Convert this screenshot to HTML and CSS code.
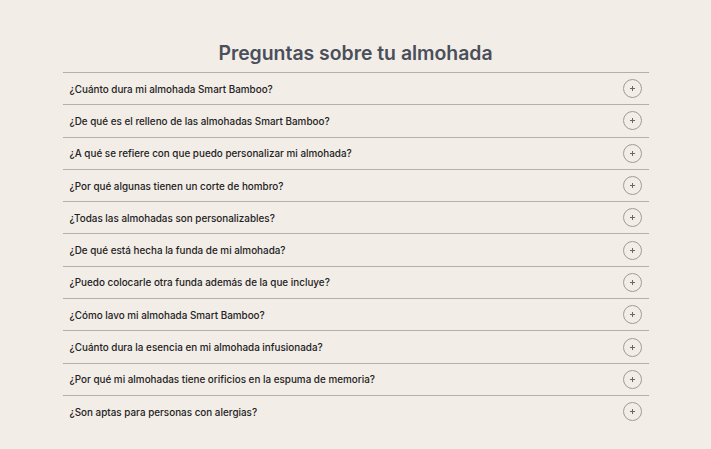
FILE: index.html
```html
<!DOCTYPE html>
<html lang="es">
<head>
<meta charset="utf-8">
<link rel="stylesheet" href="styles.css">
</head>
<body>
<section class="faq">
  <h2 class="faq-title">Preguntas sobre tu almohada</h2>
  <div class="faq-list">
    <div class="faq-item"><span class="q">¿Cuánto dura mi almohada Smart Bamboo?</span><span class="plus"></span></div>
    <div class="faq-item"><span class="q">¿De qué es el relleno de las almohadas Smart Bamboo?</span><span class="plus"></span></div>
    <div class="faq-item"><span class="q">¿A qué se refiere con que puedo personalizar mi almohada?</span><span class="plus"></span></div>
    <div class="faq-item"><span class="q">¿Por qué algunas tienen un corte de hombro?</span><span class="plus"></span></div>
    <div class="faq-item"><span class="q">¿Todas las almohadas son personalizables?</span><span class="plus"></span></div>
    <div class="faq-item"><span class="q">¿De qué está hecha la funda de mi almohada?</span><span class="plus"></span></div>
    <div class="faq-item"><span class="q">¿Puedo colocarle otra funda además de la que incluye?</span><span class="plus"></span></div>
    <div class="faq-item"><span class="q">¿Cómo lavo mi almohada Smart Bamboo?</span><span class="plus"></span></div>
    <div class="faq-item"><span class="q">¿Cuánto dura la esencia en mi almohada infusionada?</span><span class="plus"></span></div>
    <div class="faq-item"><span class="q">¿Por qué mi almohadas tiene orificios en la espuma de memoria?</span><span class="plus"></span></div>
    <div class="faq-item last"><span class="q">¿Son aptas para personas con alergias?</span><span class="plus"></span></div>
  </div>
</section>
</body>
</html>
```
FILE: styles.css
```css
html, body {
  margin: 0;
  padding: 0;
  background: #f2ede7;
}
body {
  font-family: "Inter", "Noto Sans", sans-serif;
}
.faq {
  width: 586px;
  margin: 0 auto;
  padding-top: 41px;
}
.faq-title {
  margin: 0 0 7px;
  text-align: center;
  font-size: 19.4px;
  line-height: 24px;
  font-weight: 600;
  color: #4a4f5a;
}
.faq-item {
  box-sizing: border-box;
  height: 32.3px;
  border-top: 1px solid #b3afab;
  display: flex;
  align-items: center;
  justify-content: space-between;
  padding: 0 7px;
}
.q {
  font-size: 9.9px;
  font-weight: 500;
  color: #222;
}
.plus {
  position: relative;
  width: 17px;
  height: 17px;
  border: 1px solid #a09b96;
  border-radius: 50%;
}
.plus::before, .plus::after {
  content: "";
  position: absolute;
  left: 50%;
  top: 50%;
  background: #6a6661;
}
.plus::before {
  width: 5px;
  height: 1px;
  margin: -0.5px 0 0 -2.5px;
}
.plus::after {
  width: 1px;
  height: 5px;
  margin: -2.5px 0 0 -0.5px;
}
```
